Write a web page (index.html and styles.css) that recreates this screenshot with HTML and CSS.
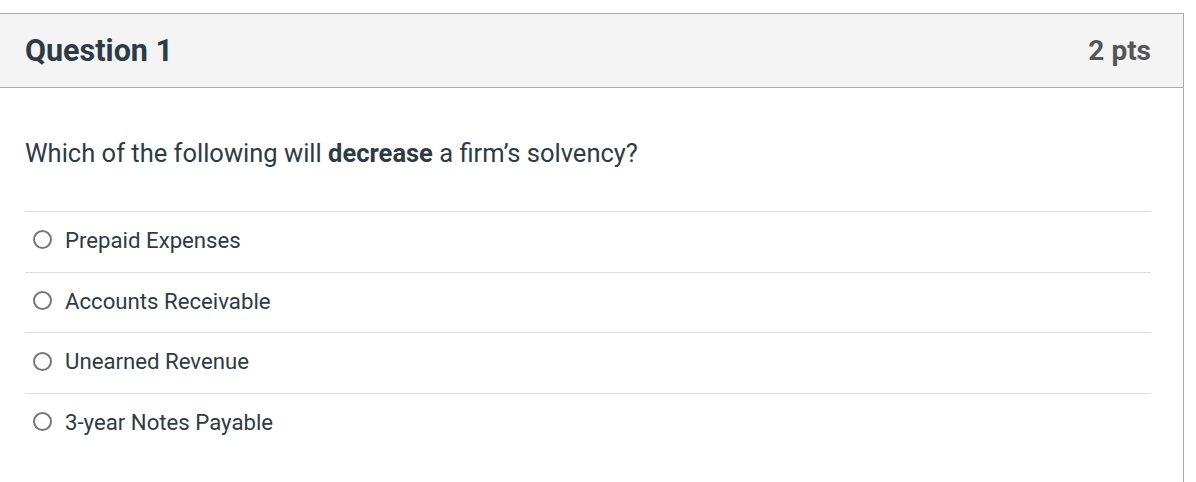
FILE: index.html
```html
<!DOCTYPE html>
<html>
<head>
<meta charset="utf-8">
<link rel="stylesheet" href="styles.css">
</head>
<body>
<div class="card">
  <div class="header">
    <h2 class="title">Question 1</h2>
    <span class="pts">2 pts</span>
  </div>
  <div class="content">
    <p class="prompt">Which of the following will <strong>decrease</strong> a firm’s solvency?</p>
    <div class="answers">
      <label class="answer"><span class="radio"></span><span>Prepaid Expenses</span></label>
      <label class="answer"><span class="radio"></span><span>Accounts Receivable</span></label>
      <label class="answer"><span class="radio"></span><span>Unearned Revenue</span></label>
      <label class="answer"><span class="radio"></span><span>3-year Notes Payable</span></label>
    </div>
  </div>
</div>
</body>
</html>
```

FILE: styles.css
```css
html, body { margin: 0; padding: 0; background: #fff; }
body { font-family: Roboto, "Liberation Sans", sans-serif; color: #2d3b45; }
.card {
  margin-top: 13px;
  margin-left: -1px;
  width: 1185px;
  height: 469px;
  border: 1px solid #aaa;
  border-bottom: none;
  box-sizing: border-box;
}
.header {
  background: #f4f4f4;
  height: 74px;
  border-bottom: 1px solid #aaa;
  box-sizing: border-box;
  display: flex;
  align-items: center;
  justify-content: space-between;
  padding: 0 32px 0 25px;
}
.title { margin: 0; font-size: 30.5px; font-weight: 700; color: #2d3b45; }
.pts { font-size: 28px; font-weight: 700; color: #555; }
.content { padding: 0 32px 0 25px; }
.prompt { margin: 0; padding-top: 49px; height: 123px; box-sizing: border-box; font-size: 25.5px; line-height: 32px; }
.prompt strong { font-weight: 700; }
.answers { display: flex; flex-direction: column; }
.answer {
  display: flex; align-items: center; gap: 13px;
  height: 60.7px; box-sizing: border-box;
  border-top: 1px solid #ddd;
  padding-left: 8px;
  padding-bottom: 4px;
  font-size: 22.2px;
}
.radio {
  width: 19px; height: 19px; border: 2px solid #777; border-radius: 50%; box-sizing: border-box; flex: none;
}
```
